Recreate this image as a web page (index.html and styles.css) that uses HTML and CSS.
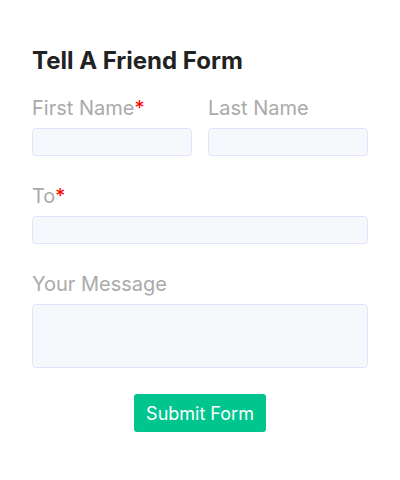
FILE: index.html
```html
<!DOCTYPE html>
<html>
<head>
<meta charset="utf-8">
<link rel="stylesheet" href="styles.css">
</head>
<body>
<form class="form">
  <h1 class="title">Tell A Friend Form</h1>
  <div class="row">
    <div class="field">
      <label class="label">First Name<span class="req">*</span></label>
      <div class="input"></div>
    </div>
    <div class="field">
      <label class="label">Last Name</label>
      <div class="input"></div>
    </div>
  </div>
  <div class="field">
    <label class="label">To<span class="req">*</span></label>
    <div class="input"></div>
  </div>
  <div class="field">
    <label class="label">Your Message</label>
    <div class="input textarea"></div>
  </div>
  <div class="actions">
    <button type="button" class="btn">Submit Form</button>
  </div>
</form>
</body>
</html>
```
FILE: styles.css
```css
* { box-sizing: border-box; }
body {
  margin: 0;
  background: #fff;
  font-family: Inter, "Noto Sans", sans-serif;
}
.form {
  padding: 45px 32px 32px;
  display: flex;
  flex-direction: column;
}
.title {
  margin: 0 0 19px;
  font-size: 24px;
  line-height: 32px;
  font-weight: 700;
  color: #222;
}
.row {
  display: grid;
  grid-template-columns: 1fr 1fr;
  column-gap: 16px;
}
.field {
  display: flex;
  flex-direction: column;
  margin-bottom: 28px;
}
.label {
  font-size: 20px;
  line-height: 24px;
  color: #aaaaaa;
  margin-bottom: 8px;
}
.req { color: #ff0000; }
.input {
  height: 28px;
  background: #f7f8fb;
  border: 1px solid #dfe3fb;
  border-radius: 4px;
}
.textarea { height: 64px; }
.actions {
  display: flex;
  justify-content: center;
  margin-top: -2px;
}
.btn {
  width: 132px;
  height: 38px;
  border: none;
  border-radius: 3px;
  background: #00c58e;
  color: #fff;
  font-family: Inter, "Noto Sans", sans-serif;
  font-size: 18px;
}
```
